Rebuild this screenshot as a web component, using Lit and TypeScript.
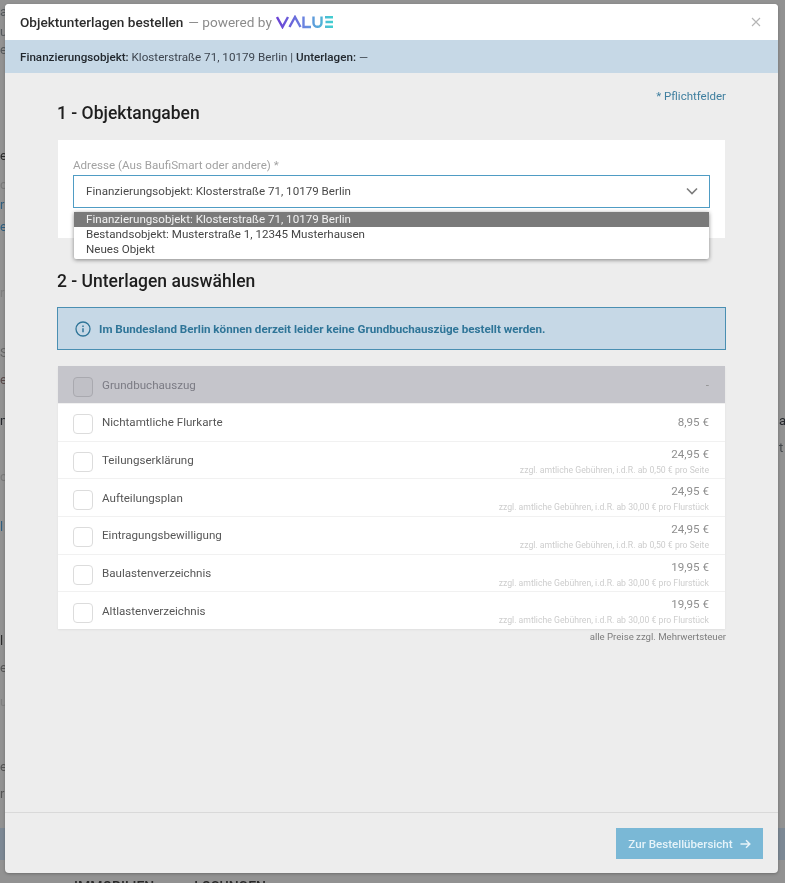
import { LitElement, html, css } from "lit";
import { customElement } from "lit/decorators.js";

const items = [
  { name: "Nichtamtliche Flurkarte", price: "8,95 €", note: "" },
  { name: "Teilungserklärung", price: "24,95 €", note: "zzgl. amtliche Gebühren, i.d.R. ab 0,50 € pro Seite" },
  { name: "Aufteilungsplan", price: "24,95 €", note: "zzgl. amtliche Gebühren, i.d.R. ab 30,00 € pro Flurstück" },
  { name: "Eintragungsbewilligung", price: "24,95 €", note: "zzgl. amtliche Gebühren, i.d.R. ab 0,50 € pro Seite" },
  { name: "Baulastenverzeichnis", price: "19,95 €", note: "zzgl. amtliche Gebühren, i.d.R. ab 30,00 € pro Flurstück" },
  { name: "Altlastenverzeichnis", price: "19,95 €", note: "zzgl. amtliche Gebühren, i.d.R. ab 30,00 € pro Flurstück" },
];

/* Fragments of the dimmed page that stay visible beside the dialog. */
const pageRows = [
  { y: 12, l: "a", r: "", c: "#55595c" },
  { y: 32, l: "u", r: "", c: "#55595c" },
  { y: 50, l: "e", r: "", c: "#55595c" },
  { y: 156, l: "e", r: "", c: "#2b2b2b" },
  { y: 185, l: "c", r: "", c: "#7b7b7b" },
  { y: 205, l: "r", r: "", c: "#2f5f80" },
  { y: 227, l: "e", r: "", c: "#2f5f80" },
  { y: 293, l: "r", r: "", c: "#7f7f7f" },
  { y: 353, l: "S", r: "", c: "#666" },
  { y: 380, l: "e", r: "", c: "#5a4a4a" },
  { y: 421, l: "n", r: "a", c: "#25282c" },
  { y: 448, l: "", r: "t", c: "#44484c" },
  { y: 477, l: "c", r: "", c: "#7b7b7b" },
  { y: 527, l: "l", r: "", c: "#2f5f80" },
  { y: 641, l: "l", r: "", c: "#2b2b2b" },
  { y: 668, l: "e", r: "", c: "#555" },
  { y: 702, l: "u", r: "", c: "#7f7f7f" },
  { y: 767, l: "e", r: "", c: "#555" },
  { y: 794, l: "r", r: "", c: "#555" },
];

@customElement("app-root")
export class AppRoot extends LitElement {
  static styles = css`
    :host {
      display: block;
      width: 785px;
      height: 883px;
      overflow: hidden;
      font-family: Roboto, "Liberation Sans", sans-serif;
    }
    .screen {
      position: relative;
      width: 785px;
      height: 883px;
      overflow: hidden;
      filter: blur(0.35px);
    }
    .page {
      height: 883px;
      background: #929292;
      display: flex;
      flex-direction: column;
      overflow: hidden;
    }
    .page-row {
      display: flex;
      align-items: flex-end;
      font-size: 13px;
      line-height: 16px;
      flex: none;
    }
    .edge-l { width: 5px; overflow: hidden; white-space: nowrap; }
    .edge-r { width: 6px; margin-left: auto; overflow: hidden; white-space: nowrap; }
    .band {
      height: 32px;
      margin-top: 26px;
      background: #7c8894;
      flex: none;
    }
    .page-foot {
      margin-top: 19px;
      height: 16px;
      flex: none;
      display: flex;
      font-size: 14px;
      font-weight: 500;
      line-height: 16px;
      color: #2a2a2a;
      white-space: pre;
      padding-left: 74px;
      gap: 40px;
    }
    .modal {
      position: absolute;
      left: 5px;
      top: 4px;
      right: 7px;
      bottom: 10px;
      display: flex;
      flex-direction: column;
      background: #ededed;
      border-radius: 4px;
      overflow: hidden;
      box-shadow: 0 1px 3px rgba(0, 0, 0, 0.25);
    }
    .head {
      height: 36px;
      background: #fff;
      display: flex;
      align-items: center;
      padding: 0 15px;
      font-size: 13.6px;
      color: #2d2d2d;
      flex: none;
    }
    .head b { font-weight: 500; }
    .powered { color: #8b8b8b; margin-left: 5px; }
    .logo { margin-left: 4px; display: block; }
    .close { margin-left: auto; margin-right: 2px; display: block; }
    .banner {
      height: 33px;
      flex: none;
      box-sizing: border-box;
      background: #c6d8e6;
      display: flex;
      align-items: center;
      padding: 0 15px;
      font-size: 11.65px;
      color: #3e4650;
      white-space: pre;
    }
    .banner b { font-weight: 500; color: #22282e; }
    .body {
      flex: 1;
      padding: 0 52px;
    }
    .req {
      text-align: right;
      font-size: 11.5px;
      color: #3f7f9f;
      padding-top: 16px;
      line-height: 14px;
    }
    h2 {
      margin: 0;
      font-size: 17.5px;
      font-weight: 500;
      color: #1e1e1e;
      line-height: 20px;
    }
    .card {
      margin: 17px 1px 0;
      height: 98px;
      box-sizing: border-box;
      background: #fff;
      padding: 18px 15px 0;
      position: relative;
    }
    .label {
      font-size: 11.6px;
      color: #a2a2a2;
      line-height: 14px;
    }
    .select {
      margin-top: 3px;
      height: 33px;
      box-sizing: border-box;
      border: 1px solid #4f9cc4;
      display: flex;
      align-items: center;
      justify-content: space-between;
      padding: 0 11px 2px 12px;
      font-size: 11.6px;
      color: #4a4a4a;
    }
    .menu {
      position: absolute;
      left: 16px;
      right: 16px;
      top: 72px;
      background: #fff;
      box-shadow: 0 1px 4px rgba(0, 0, 0, 0.45);
      font-size: 11.6px;
      color: #454545;
      padding-bottom: 2px;
      border-radius: 0 0 2px 2px;
    }
    .menu div { height: 15px; line-height: 15px; padding-left: 12px; }
    .menu .on { background: #7a7a7a; color: #f2f2f2; }
    h2.two { margin-top: 33px; }
    .info {
      margin-top: 16px;
      height: 43px;
      box-sizing: border-box;
      border: 1px solid #4a8fb2;
      background: #c6d8e6;
      display: flex;
      align-items: center;
      gap: 8px;
      padding-left: 17px;
      font-size: 11.64px;
      font-weight: 700;
      color: #2f7598;
    }
    .table {
      margin: 16px 1px 0;
      background: #fff;
      box-shadow: 0 1px 2px rgba(0, 0, 0, 0.06);
    }
    .row {
      height: 37.7px;
      box-sizing: border-box;
      display: flex;
      align-items: center;
      padding: 0 16px 0 15px;
      border-top: 1px solid #f1f1f1;
      font-size: 11.6px;
      color: #565656;
    }
    .row.off {
      height: 37px;
      background: #c5c5cb;
      border-top: 0;
      color: #7b7b84;
    }
    .box {
      width: 18px;
      height: 18px;
      border: 1px solid #dcdcdc;
      border-radius: 4px;
      margin: 4px 9px 0 0;
      background: #fff;
      flex: none;
    }
    .off .box { background: #c0c0c6; border-color: #a9a9af; }
    .price {
      margin-left: auto;
      text-align: right;
      color: #8f8f8f;
      font-size: 11.6px;
    }
    .price.noted { padding-top: 1px; }
    .price small {
      display: block;
      font-size: 8.68px;
      line-height: 10px;
      margin-top: 4px;
      color: #cdcdcd;
    }
    .vat {
      text-align: right;
      font-size: 9.6px;
      color: #7d7d7d;
      line-height: 13px;
      margin-top: 1px;
    }
    .foot {
      flex: none;
      height: 61px;
      box-sizing: border-box;
      border-top: 1px solid #d9d9d9;
      display: flex;
      justify-content: flex-end;
      align-items: flex-start;
      padding: 15px 15px 0 0;
    }
    .btn {
      width: 147px;
      height: 31px;
      background: #7ab8d6;
      color: #e6f3f9;
      font-size: 11.6px;
      font-weight: 500;
      display: flex;
      align-items: center;
      justify-content: center;
      gap: 7px;
    }
  `;

  private pageFragments() {
    let prev = 0;
    return pageRows.map((r) => {
      const h = r.y + 8 - prev;
      prev = r.y + 8;
      return html`<div class="page-row" style="height:${h}px;color:${r.c}">
        <span class="edge-l">${r.l}</span><span class="edge-r">${r.r}</span>
      </div>`;
    });
  }

  render() {
    return html`
      <div class="screen">
        <div class="page">
          ${this.pageFragments()}
          <div class="band"></div>
          <div class="page-foot"><span>IMMOBILIEN</span><span>LOSUNGEN</span></div>
        </div>
        <div class="modal">
          <div class="head">
            <b>Objektunterlagen bestellen</b>
            <span class="powered">— powered by</span>
            <svg class="logo" width="58" height="14" viewBox="0 0 58 14" fill="none" stroke="url(#g)" stroke-width="2.4">
              <defs>
                <linearGradient id="g" gradientUnits="userSpaceOnUse" x1="0" y1="0" x2="58" y2="0">
                  <stop offset="0" stop-color="#6b3fd4" />
                  <stop offset="0.5" stop-color="#6a86e0" />
                  <stop offset="1" stop-color="#3fd2cf" />
                </linearGradient>
              </defs>
              <path d="M1 2l5.500 10L12 2" />
              <path d="M13.500 12L19 2l5.500 10" />
              <path d="M27.500 1.500V12H35" />
              <path d="M37.500 1.500V8c0 5 8 5 8 0V1.500" />
              <path d="M49 2.200h8M49.500 7h7.500M49 11.800h8" />
            </svg>
            <svg class="close" width="10" height="10" viewBox="0 0 10 10" stroke="#b5b5b5" stroke-width="1.100">
              <path d="M1 1l8 8M9 1l-8 8" />
            </svg>
          </div>
          <div class="banner"><b>Finanzierungsobjekt:</b> Klosterstraße 71, 10179 Berlin | <b>Unterlagen:</b> —</div>
          <div class="body">
            <div class="req">* Pflichtfelder</div>
            <h2>1 - Objektangaben</h2>
            <div class="card">
              <div class="label">Adresse (Aus BaufiSmart oder andere) *</div>
              <div class="select">
                <span>Finanzierungsobjekt: Klosterstraße 71, 10179 Berlin</span>
                <svg width="12" height="8" viewBox="0 0 12 8" fill="none" stroke="#7d7d7d" stroke-width="1.600">
                  <path d="M1 1.500l5 5 5-5" />
                </svg>
              </div>
              <div class="menu">
                <div class="on">Finanzierungsobjekt: Klosterstraße 71, 10179 Berlin</div>
                <div>Bestandsobjekt: Musterstraße 1, 12345 Musterhausen</div>
                <div>Neues Objekt</div>
              </div>
            </div>
            <h2 class="two">2 - Unterlagen auswählen</h2>
            <div class="info">
              <svg width="16" height="16" viewBox="0 0 16 16" fill="none" stroke="#2f7598" stroke-width="1.300">
                <circle cx="8" cy="8" r="7" />
                <path d="M8 7.200v4M8 4.500v1.400" stroke-width="1.500" />
              </svg>
              <span>Im Bundesland Berlin können derzeit leider keine Grundbuchauszüge bestellt werden.</span>
            </div>
            <div class="table">
              <div class="row off">
                <span class="box"></span>
                <span>Grundbuchauszug</span>
                <span class="price">-</span>
              </div>
              ${items.map(
                (i) => html`
                  <div class="row">
                    <span class="box"></span>
                    <span>${i.name}</span>
                    <span class="price ${i.note ? "noted" : ""}">${i.price}${i.note ? html`<small>${i.note}</small>` : ""}</span>
                  </div>
                `
              )}
            </div>
            <div class="vat">alle Preise zzgl. Mehrwertsteuer</div>
          </div>
          <div class="foot">
            <div class="btn">
              <span>Zur Bestellübersicht</span>
              <svg width="11" height="10" viewBox="0 0 11 10" fill="none" stroke="#e6f3f9" stroke-width="1.500">
                <path d="M0.500 5h9M6 1.200L9.800 5 6 8.800" />
              </svg>
            </div>
          </div>
        </div>
      </div>
    `;
  }
}
